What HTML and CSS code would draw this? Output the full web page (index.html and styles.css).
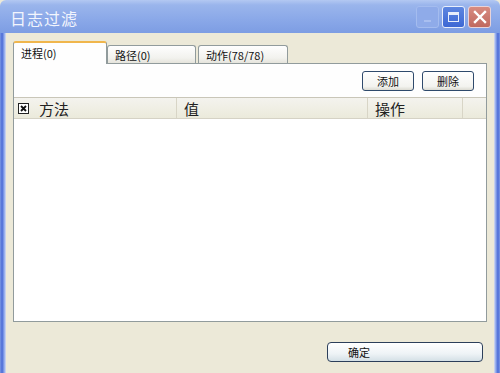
FILE: index.html
```html
<html>
<head>
  <link rel="stylesheet" href="styles.css">
</head>
<body>
  <div class="window">
    <div class="titlebar">
      <span class="title">日志过滤</span>
      <div class="title-buttons">
        <div class="tbtn min"><span class="min-bar"></span></div>
        <div class="tbtn max"><span class="max-box"></span></div>
        <div class="tbtn close">
          <svg width="14" height="14" viewBox="0 0 14 14">
            <path d="M2 2 L12 12 M12 2 L2 12" stroke="#fff" stroke-width="2.4" stroke-linecap="square"/>
          </svg>
        </div>
      </div>
    </div>
    <div class="frame">
      <div class="edge left"></div>
      <div class="client">
        <div class="tabs">
          <div class="tab active">进程(0)</div>
          <div class="tab">路径(0)</div>
          <div class="tab">动作(78/78)</div>
        </div>
        <div class="panel">
          <div class="toolbar">
            <button class="btn">添加</button>
            <button class="btn">删除</button>
          </div>
          <div class="list">
            <div class="list-head">
              <div class="col col-method"><span class="check">
                <svg width="11" height="11" viewBox="0 0 11 11">
                  <rect x="0.5" y="0.5" width="10" height="10" fill="#fff" stroke="#222"/>
                  <path d="M3 3 L8 8 M8 3 L3 8" stroke="#111" stroke-width="1.8"/>
                </svg>
              </span>方法</div>
              <div class="col col-value">值</div>
              <div class="col col-op">操作</div>
              <div class="col col-rest"></div>
            </div>
            <div class="list-body"></div>
          </div>
        </div>
        <div class="footer">
          <button class="btn ok">确定</button>
        </div>
      </div>
      <div class="edge right"></div>
    </div>
  </div>
</body>
</html>
```

FILE: styles.css
```css
body {
  margin: 0;
  font-family: "Noto Sans CJK SC", "DejaVu Sans", sans-serif;
  background: #ece9d8;
}

.window {
  width: 500px;
  height: 373px;
  display: flex;
  flex-direction: column;
  overflow: hidden;
}

.titlebar {
  height: 33px;
  flex-shrink: 0;
  display: flex;
  align-items: center;
  justify-content: space-between;
  padding: 0 8px 0 10px;
  background: linear-gradient(to bottom, #b3c8f2 0%, #9ab5ec 15%, #8aa8e8 60%, #7d9de3 100%);
  border-radius: 6px 6px 0 0;
}

.title {
  color: #f2f5fd;
  font-size: 16px;
  letter-spacing: 1px;
  padding-top: 2px;
}

.title-buttons {
  display: flex;
  gap: 3px;
  padding-top: 1px;
  margin-right: 1px;
}

.tbtn {
  width: 23px;
  height: 22px;
  border-radius: 3px;
  box-sizing: border-box;
  display: flex;
  align-items: center;
  justify-content: center;
}

.tbtn.min {
  background: #8fabe9;
  border: 1px solid #a4bcef;
  align-items: flex-end;
}

.min-bar {
  width: 7px;
  height: 2px;
  background: #a9bff0;
  margin-bottom: 5px;
}

.tbtn.max {
  background: linear-gradient(to bottom, #5d86e0, #3d68d4);
  border: 1px solid #e8eefb;
}

.max-box {
  width: 11px;
  height: 10px;
  box-sizing: border-box;
  border: 1px solid #e8eefb;
  border-top-width: 3px;
}

.tbtn.close {
  background: linear-gradient(to bottom, #d88b80, #c0695f);
  border: 1px solid #e8d3d8;
}

.frame {
  flex: 1;
  display: flex;
}

.edge {
  width: 6px;
  flex-shrink: 0;
}

.edge.left {
  background: linear-gradient(to right, #7b97e4, #4a6bd6 35%, #8ea8ec 70%, #d8def0);
}

.edge.right {
  background: linear-gradient(to left, #7b97e4, #4a6bd6 35%, #8ea8ec 70%, #d8def0);
}

.client {
  flex: 1;
  display: flex;
  flex-direction: column;
  padding: 8px 7px 0 7px;
  background: #ece9d8;
}

.tabs {
  display: flex;
  align-items: flex-end;
  height: 22px;
  position: relative;
  z-index: 1;
}

.tab {
  font-size: 11px;
  color: #111;
  height: 18px;
  box-sizing: border-box;
  border: 1px solid #919b9c;
  border-bottom: none;
  border-radius: 3px 3px 0 0;
  background: linear-gradient(to bottom, #fefefe, #f2f2ee 70%, #e5e4dc);
  padding: 1px 6px 0 7px;
  margin-right: 2px;
}

.tab:nth-child(2) {
  width: 89px;
}

.tab:nth-child(3) {
  width: 90px;
}

.tab.active {
  width: 94px;
  height: 23px;
  background: #fefefe;
  border-top: 2px solid #f0b64c;
  padding-top: 2px;
  margin-right: 0;
  margin-bottom: -1px;
}

.panel {
  height: 257px;
  background: #fefefe;
  border: 1px solid #919b9c;
  display: flex;
  flex-direction: column;
}

.toolbar {
  display: flex;
  justify-content: flex-end;
  gap: 8px;
  padding: 7px 12px 0 0;
  height: 26px;
  box-sizing: content-box;
}

.btn {
  font-family: "Noto Sans CJK SC", "DejaVu Sans", sans-serif;
  font-size: 11px;
  color: #111;
  width: 52px;
  height: 20px;
  padding: 0;
  border: 1px solid #2f4a6c;
  border-radius: 3px;
  background: linear-gradient(to bottom, #ffffff, #f3f3ef 80%, #dcdbd2);
}

.list {
  flex: 1;
  display: flex;
  flex-direction: column;
  border-top: 1px solid #c9c6b8;
}

.list-head {
  display: flex;
  height: 20px;
  background: linear-gradient(to bottom, #f4f3ee, #ebeadb);
  border-bottom: 1px solid #d5d2c5;
  font-size: 15px;
  color: #222;
}

.col {
  display: flex;
  align-items: center;
  box-sizing: border-box;
  border-right: 1px solid #d8d5c6;
  line-height: 1;
}

.col-method {
  width: 163px;
  padding-left: 4px;
}

.check {
  display: flex;
  margin-right: 10px;
}

.col-value {
  width: 191px;
  padding-left: 7px;
}

.col-op {
  width: 95px;
  padding-left: 7px;
}

.col-rest {
  flex: 1;
  border-right: none;
}

.list-body {
  flex: 1;
  background: #fff;
}

.footer {
  display: flex;
  justify-content: flex-end;
  padding: 20px 4px 0 0;
}

.btn.ok {
  width: 156px;
  height: 20px;
  text-align: left;
  padding-left: 20px;
  border-radius: 4px;
  border-color: #2c3f5a;
  background: linear-gradient(to bottom, #ffffff, #eef3f6 60%, #d4e0e6);
}
```
